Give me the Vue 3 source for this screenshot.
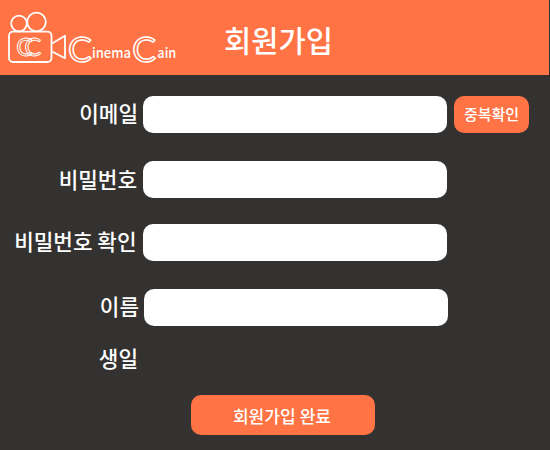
<script setup>
const fields = [
  { key: 'email', label: '이메일', type: 'email', check: true },
  { key: 'password', label: '비밀번호', type: 'password' },
  { key: 'confirm', label: '비밀번호 확인', type: 'password' },
  { key: 'name', label: '이름', type: 'text' },
]
</script>

<template>
  <main class="page">
    <header class="header">
      <svg class="logo" width="180" height="75" viewBox="0 0 180 75">
        <g class="camera">
          <circle cx="19" cy="23.5" r="7.8" />
          <circle cx="36.5" cy="22" r="9.3" />
          <rect x="9" y="31.7" width="42.5" height="30.3" rx="4" />
          <path d="M52 43.5 L65 35.8 V58.2 L52 51.5" />
        </g>
        <text class="mono" x="16.3 24.6" y="55.6">CC</text>
        <text class="cap" x="67.9" y="61.5">C</text>
        <text class="word" x="92" y="57.8" textLength="39" lengthAdjust="spacingAndGlyphs">inema</text>
        <text class="cap" x="132.2" y="61.5">C</text>
        <text class="word" x="157.3" y="57.8" textLength="19" lengthAdjust="spacingAndGlyphs">ain</text>
      </svg>
      <h1 class="title">회원가입</h1>
    </header>

    <form class="form" @submit.prevent>
      <div v-for="f in fields" :key="f.key" class="row" :class="f.key">
        <label class="label" :for="f.key">{{ f.label }}</label>
        <input :id="f.key" class="input" :type="f.type" />
        <button v-if="f.check" class="check" type="button">중복확인</button>
      </div>
      <div class="row birth">
        <span class="label">생일</span>
      </div>
      <button class="submit" type="submit">회원가입 완료</button>
    </form>
  </main>
</template>

<style>
body {
  margin: 0;
  background: #333230;
}
</style>

<style scoped>
.page {
  width: 550px;
  height: 450px;
  overflow: hidden;
  background: #333230;
  color: #fff;
  font-family: "Noto Sans CJK KR", sans-serif;
}
.header {
  display: flex;
  width: 549px;
  height: 75px;
  background: #ff7344;
}
.logo {
  flex: none;
}
.camera {
  fill: none;
  stroke: #fff;
  stroke-width: 1.8;
  stroke-linejoin: round;
}
.mono,
.cap {
  fill: none;
  stroke: #fff;
  font-family: Lato, sans-serif;
}
.mono {
  font-size: 25px;
  stroke-width: 1;
}
.cap {
  font-size: 35.5px;
  stroke-width: 1.5;
}
.word {
  fill: #fff;
  font-family: "Noto Sans CJK KR", sans-serif;
  font-size: 13.8px;
  font-weight: 500;
}
.title {
  margin: 18px 0 0 44px;
  font-size: 29.6px;
  line-height: 44px;
  font-weight: 500;
  white-space: nowrap;
}
.form {
  display: flex;
  flex-direction: column;
  padding-top: 21px;
}
.row {
  display: grid;
  grid-template-columns: 138px 304px 75px;
  column-gap: 5px;
  height: 37px;
  margin-bottom: 28px;
}
.password {
  margin-bottom: 26px;
}
.name {
  grid-template-columns: 139px 304px;
  margin-bottom: 14px;
}
.birth {
  margin-bottom: 18px;
}
.label {
  font-size: 21.3px;
  line-height: 36px;
  font-weight: 500;
  text-align: right;
  white-space: nowrap;
}
.email .label {
  line-height: 34px;
}
.password .label {
  padding-right: 1px;
}
.confirm .label {
  padding-right: 1.5px;
  line-height: 33px;
}
.name .label {
  line-height: 33px;
}
.input {
  box-sizing: border-box;
  width: 304px;
  height: 37px;
  padding: 0 12px;
  border: 0;
  border-radius: 10px;
  background: #fff;
}
.check,
.submit {
  padding: 0;
  border: 0;
  border-radius: 10px;
  background: #ff7344;
  color: #fff;
  font-family: inherit;
  font-weight: 500;
}
.check {
  margin-left: 2px;
  width: 75px;
  height: 37px;
  padding-bottom: 2px;
  font-size: 15px;
}
.submit {
  width: 184px;
  height: 40px;
  margin-left: 191px;
  padding-right: 2px;
  font-size: 17.1px;
}
</style>
